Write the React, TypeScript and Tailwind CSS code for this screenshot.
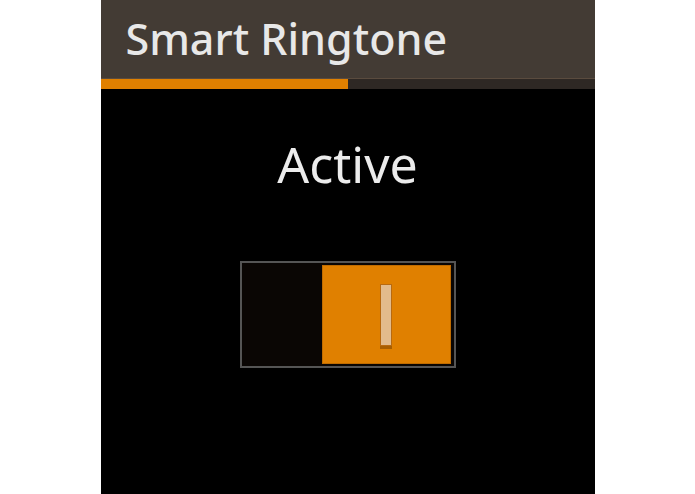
export default function App() {
  return (
    <div className="flex h-[494px] w-[695px] justify-center bg-white">
      <div className="flex w-[494px] flex-col bg-black" style={{ fontFamily: '"Noto Sans", "Open Sans", sans-serif' }}>
        <div className="flex h-[79px] items-center border-b border-[#5a4b3e] bg-[#433b34] pl-[25px]">
          <h1 className="pb-[2px] text-[43px] leading-none font-medium text-[#e8e8e8]">Smart Ringtone</h1>
        </div>
        <div className="flex h-[10px] bg-[#2e2824]">
          <div className="w-1/2 bg-[#e08000]" />
        </div>
        <div className="flex flex-col items-center">
          <p className="mt-[50px] text-[50px] leading-none text-[#ececec]">Active</p>
          <div className="mt-[72px] flex h-[107px] w-[216px] border-2 border-[#555555] bg-[#0a0604] py-[2px] pr-[3px] pl-[80px]">
            <div className="flex flex-1 items-center justify-center border border-[#c06c00] bg-[#e08000]">
              <div className="h-[62px] w-[12px] border border-[#b86a10] bg-[#e2bb8c] shadow-[0_3px_0_#a85e00]" />
            </div>
          </div>
        </div>
      </div>
    </div>
  );
}
